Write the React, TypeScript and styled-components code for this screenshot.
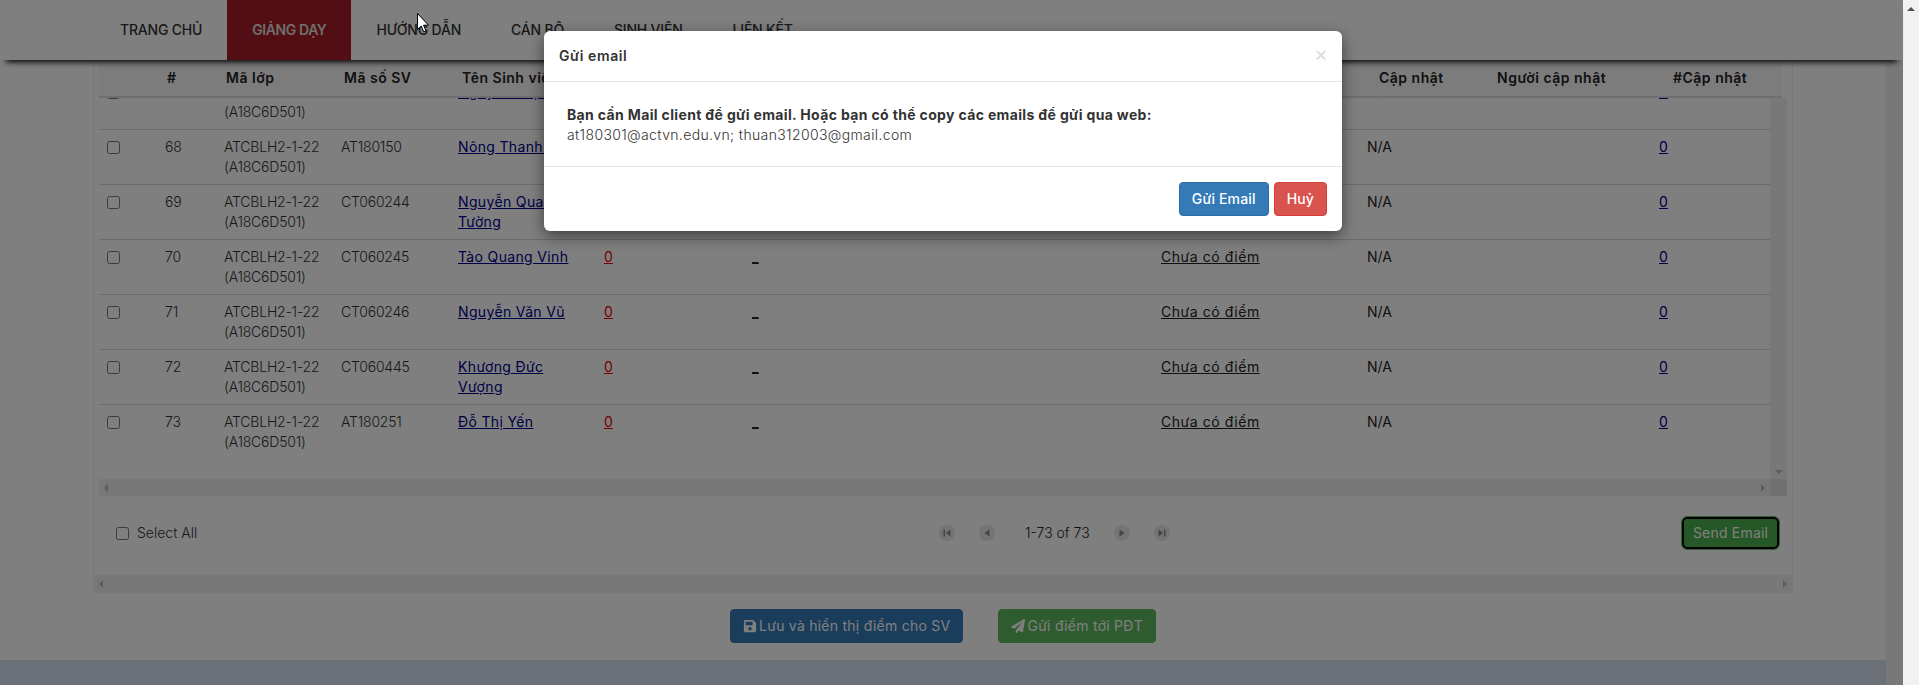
import React from 'react';
import styled, { createGlobalStyle } from 'styled-components';
import { FaSave, FaPaperPlane } from 'react-icons/fa';

const GlobalStyle = createGlobalStyle`
  html, body {
    margin: 0;
    padding: 0;
    overflow: hidden;
  }
  body {
    font-family: Inter, "Open Sans", "Liberation Sans", sans-serif;
    font-size: 14px;
    line-height: 20px;
    color: #333;
    background: #f1f1f1;
  }
  * { box-sizing: border-box; }
`;

const Window = styled.div`
  display: flex;
  width: 1919px;
  height: 685px;
  overflow: hidden;
`;

const Page = styled.div`
  position: relative;
  display: flex;
  flex-direction: column;
  width: 1903px;
  background: #fff;
`;

const BrowserScroll = styled.div`
  flex: 1;
  display: flex;
  justify-content: center;
  padding-top: 7px;
  background: #f1f1f1;
`;

const Navbar = styled.nav`
  position: relative;
  z-index: 2;
  display: flex;
  flex: none;
  height: 60px;
  padding-left: 95px;
  background: #fff;
  box-shadow: 0 8px 6px -6px #000;
`;

const NavItem = styled.a<{ $active?: boolean }>`
  display: flex;
  align-items: center;
  padding: 0 25px;
  font-weight: ${p => (p.$active ? 600 : 500)};
  letter-spacing: ${p => (p.$active ? '-0.4px' : '-0.2px')};
  color: ${p => (p.$active ? '#ddd' : '#333')};
  background: ${p => (p.$active ? '#a41c24' : 'transparent')};
`;

const Middle = styled.div`
  display: flex;
  flex: none;
  height: 625px;
`;

const Content = styled.div`
  display: flex;
  flex-direction: column;
  width: 1886px;
`;

const InnerScroll = styled.div`
  width: 17px;
  background: #f1f1f1;
`;

const Panel = styled.div`
  display: flex;
  flex-direction: column;
  margin-left: 93px;
  width: 1700px;
  height: 533px;
  border-left: 1px solid #eee;
  border-right: 1px solid #eee;
`;

const TableArea = styled.div`
  margin-left: 5px;
  width: 1688px;
`;

const HeaderRow = styled.div`
  display: grid;
  grid-template-columns: 60px 59px 118px 118px 917px 118px 176px 117px;
  align-items: center;
  width: 1683px;
  height: 38px;
  border-bottom: 2px solid #ddd;
  font-weight: 600;
  letter-spacing: 0.5px;
  color: #222;
  background: #f8f8f8;
  overflow: hidden;
`;

const HeaderCell = styled.div`
  padding: 0 8px;
  white-space: nowrap;
`;

const BodyWrap = styled.div`
  display: flex;
  height: 381px;
`;

const Rows = styled.div`
  width: 1671px;
  overflow: hidden;
`;

const RowList = styled.div`
  margin-top: -23px;
`;

const Row = styled.div`
  display: grid;
  grid-template-columns: 58px 59px 117px 117px 146px 148px 409px 206px 292px 119px;
  height: 55px;
  border-bottom: 1px solid #d6d6d6;
  &:last-child { border-bottom: 0; }
`;

const Cell = styled.div`
  padding: 7px 8px 0;
`;

const LightCell = styled(Cell)`
  font-weight: 300;
  letter-spacing: -0.2px;
`;

const CheckBox = styled.span`
  display: block;
  width: 13px;
  height: 13px;
  margin-top: 4px;
  border: 1px solid #767676;
  border-radius: 2.5px;
  background: #fff;
`;

const StudentLink = styled.a`
  color: #00008b;
  letter-spacing: 0.35px;
  text-decoration: underline;
`;

const ZeroLink = styled.a<{ $red?: boolean }>`
  color: ${p => (p.$red ? '#e00' : '#00008b')};
  text-decoration: underline;
`;

const GradeLink = styled.a`
  color: #222;
  letter-spacing: 0.55px;
  text-decoration: underline;
`;

const Plain = styled.span`
  color: #222;
`;

const VerticalTrack = styled.div`
  display: flex;
  align-items: flex-end;
  justify-content: center;
  width: 17px;
  padding-bottom: 5px;
  background: #f1f1f1;
`;

const HorizontalTrack = styled.div<{ $inset?: boolean }>`
  display: flex;
  flex: none;
  align-items: center;
  justify-content: space-between;
  width: ${p => (p.$inset ? '1671px' : 'auto')};
  height: ${p => (p.$inset ? '17px' : '18px')};
  padding: 0 5px;
  background: #f1f1f1;
`;

const ScrollRow = styled.div`
  display: flex;
`;

const Corner = styled.div`
  width: 17px;
  background: #e2e2e2;
`;

const Arrow = styled.span<{ $dir: 'left' | 'right' | 'up' | 'down' }>`
  display: block;
  width: 0;
  height: 0;
  ${p => p.$dir === 'left' && 'border-top: 4px solid transparent; border-bottom: 4px solid transparent; border-right: 4px solid #b8b8b8;'}
  ${p => p.$dir === 'right' && 'border-top: 4px solid transparent; border-bottom: 4px solid transparent; border-left: 4px solid #b8b8b8;'}
  ${p => p.$dir === 'down' && 'border-left: 4px solid transparent; border-right: 4px solid transparent; border-top: 4px solid #b8b8b8;'}
  ${p => p.$dir === 'up' && 'border-left: 4px solid transparent; border-right: 4px solid transparent; border-bottom: 4px solid #505050;'}
`;

const Footer = styled.div`
  display: grid;
  grid-template-columns: 811px 1fr auto;
  align-items: center;
  height: 79px;
  padding: 0 12px 5px 22px;
`;

const SelectAll = styled.label`
  display: flex;
  align-items: center;
  gap: 8px;
  font-weight: 300;
  color: #333;

  ${CheckBox} { margin: 0; }
`;

const Pager = styled.div`
  display: flex;
  align-items: center;
`;

const PagerButton = styled.span`
  display: flex;
  align-items: center;
  justify-content: center;
  width: 16px;
  height: 16px;
  margin: 0 12px;
  border-radius: 50%;
  background: #e8e8e8;
`;

const PagerText = styled.span`
  margin: 0 12px 0 18px;
  font-weight: 300;
  color: #222;
`;

const SendButton = styled.button`
  width: 97px;
  height: 32px;
  margin: 1px;
  padding: 0;
  font: inherit;
  letter-spacing: 0.2px;
  color: #fff;
  background: #4cae4c;
  border: 2px solid #000;
  border-radius: 5px;
  outline: 1px solid #5cb85c;
`;

const Actions = styled.div`
  display: flex;
  flex: none;
  justify-content: center;
  gap: 35px;
  margin-left: 93px;
  width: 1700px;
  padding-top: 16px;
  height: 67px;
`;

const ActionButton = styled.button<{ $color: string }>`
  display: flex;
  align-items: center;
  gap: 2px;
  height: 34px;
  padding: 0 12px;
  font: inherit;
  letter-spacing: 0.25px;
  color: #fff;
  background: ${p => p.$color};
  border: 1px solid ${p => p.$color};
  border-radius: 4px;
`;

const BottomBand = styled.div`
  flex: 1;
  background: #d9e0f3;
`;

const Overlay = styled.div`
  position: absolute;
  inset: 0;
  z-index: 3;
  background: rgba(0, 0, 0, 0.5);
`;

const Modal = styled.div`
  position: absolute;
  left: 544px;
  top: 31px;
  z-index: 4;
  width: 798px;
  height: 200px;
  background: #fff;
  border-radius: 6px;
  box-shadow: 0 5px 15px rgba(0, 0, 0, 0.5);
`;

const ModalHeader = styled.div`
  display: flex;
  align-items: center;
  justify-content: space-between;
  height: 51px;
  padding: 0 15px;
  border-bottom: 1px solid #e5e5e5;
`;

const ModalTitle = styled.div`
  font-weight: 600;
  letter-spacing: 0.6px;
  color: #333;
`;

const CloseMark = styled.span`
  font-size: 21px;
  color: #dcdcdc;
  margin: -4px -1px 0 0;
`;

const ModalBody = styled.div`
  height: 85px;
  padding: 23px 23px 0;
  border-bottom: 1px solid #e5e5e5;
`;

const ModalBold = styled.div`
  font-weight: 700;
  letter-spacing: 0.35px;
  color: #333;
`;

const ModalEmails = styled.div`
  font-weight: 300;
  letter-spacing: 0.36px;
  color: #333;
`;

const ModalFooter = styled.div`
  display: flex;
  justify-content: flex-end;
  gap: 5px;
  padding: 15px;
`;

const ModalButton = styled.button<{ $color: string; $border: string }>`
  height: 34px;
  padding: 0 12px;
  font: inherit;
  font-weight: 500;
  letter-spacing: 0.15px;
  color: #fff;
  background: ${p => p.$color};
  border: 1px solid ${p => p.$border};
  border-radius: 4px;
`;

const Cursor = styled.svg`
  position: absolute;
  left: 417px;
  top: 13px;
  z-index: 5;
`;

const navItems = ['TRANG CHỦ', 'GIẢNG DẠY', 'HƯỚNG DẪN', 'CÁN BỘ', 'SINH VIÊN', 'LIÊN KẾT'];

const students = [
  { no: 67, code: 'AT180149', name: 'Nguyễn Thị Hoa' },
  { no: 68, code: 'AT180150', name: 'Nông Thanh Bình' },
  { no: 69, code: 'CT060244', name: 'Nguyễn Quang Tường' },
  { no: 70, code: 'CT060245', name: 'Tào Quang Vinh' },
  { no: 71, code: 'CT060246', name: 'Nguyễn Văn Vũ' },
  { no: 72, code: 'CT060445', name: 'Khương Đức Vượng' },
  { no: 73, code: 'AT180251', name: 'Đỗ Thị Yến' },
];

const PagerIcon = ({ d }: { d: string }) => (
  <PagerButton>
    <svg width="10" height="10" viewBox="0 0 10 10">
      <path d={d} fill="#888" />
    </svg>
  </PagerButton>
);

export default function App() {
  return (
    <Window>
      <GlobalStyle />
      <Page>
        <Navbar>
          {navItems.map((item, i) => (
            <NavItem key={item} $active={i === 1}>{item}</NavItem>
          ))}
        </Navbar>
        <Middle>
          <Content>
            <Panel>
              <TableArea>
                <HeaderRow>
                  <HeaderCell />
                  <HeaderCell>#</HeaderCell>
                  <HeaderCell>Mã lớp</HeaderCell>
                  <HeaderCell>Mã số SV</HeaderCell>
                  <HeaderCell>Tên Sinh viên</HeaderCell>
                  <HeaderCell>Cập nhật</HeaderCell>
                  <HeaderCell>Người cập nhật</HeaderCell>
                  <HeaderCell>#Cập nhật</HeaderCell>
                </HeaderRow>
                <BodyWrap>
                  <Rows>
                    <RowList>
                      {students.map(s => (
                        <Row key={s.no}>
                          <Cell><CheckBox /></Cell>
                          <LightCell>{s.no}</LightCell>
                          <LightCell>ATCBLH2-1-22 (A18C6D501)</LightCell>
                          <LightCell>{s.code}</LightCell>
                          <Cell><StudentLink>{s.name}</StudentLink></Cell>
                          <Cell><ZeroLink $red>0</ZeroLink></Cell>
                          <Cell><GradeLink>_</GradeLink></Cell>
                          <Cell><GradeLink>Chưa có điểm</GradeLink></Cell>
                          <Cell><Plain>N/A</Plain></Cell>
                          <Cell><ZeroLink>0</ZeroLink></Cell>
                        </Row>
                      ))}
                    </RowList>
                  </Rows>
                  <VerticalTrack><Arrow $dir="down" /></VerticalTrack>
                </BodyWrap>
                <ScrollRow>
                  <HorizontalTrack $inset>
                    <Arrow $dir="left" />
                    <Arrow $dir="right" />
                  </HorizontalTrack>
                  <Corner />
                </ScrollRow>
              </TableArea>
              <Footer>
                <SelectAll><CheckBox />Select All</SelectAll>
                <Pager>
                  <PagerIcon d="M1.5 1.5h1.5v7H1.5zM8.5 1.5v7L4 5z" />
                  <PagerIcon d="M7.5 1.5v7L2.5 5z" />
                  <PagerText>1-73 of 73</PagerText>
                  <PagerIcon d="M2.5 1.5v7L7.5 5z" />
                  <PagerIcon d="M1.5 1.5v7L6 5zM7 1.5h1.5v7H7z" />
                </Pager>
                <SendButton>Send Email</SendButton>
              </Footer>
              <HorizontalTrack>
                <Arrow $dir="left" />
                <Arrow $dir="right" />
              </HorizontalTrack>
            </Panel>
            <Actions>
              <ActionButton $color="#337ab7"><FaSave size={14} />Lưu và hiển thị điểm cho SV</ActionButton>
              <ActionButton $color="#5cb85c"><FaPaperPlane size={14} />Gửi điểm tới PĐT</ActionButton>
            </Actions>
            <BottomBand />
          </Content>
          <InnerScroll />
        </Middle>
        <Overlay />
        <Modal>
          <ModalHeader>
            <ModalTitle>Gửi email</ModalTitle>
            <CloseMark>×</CloseMark>
          </ModalHeader>
          <ModalBody>
            <ModalBold>Bạn cần Mail client để gửi email. Hoặc bạn có thể copy các emails để gửi qua web:</ModalBold>
            <ModalEmails>at180301@actvn.edu.vn; thuan312003@gmail.com</ModalEmails>
          </ModalBody>
          <ModalFooter>
            <ModalButton $color="#337ab7" $border="#2e6da4">Gửi Email</ModalButton>
            <ModalButton $color="#d9534f" $border="#d43f3a">Huỷ</ModalButton>
          </ModalFooter>
        </Modal>
        <Cursor width="12" height="20" viewBox="0 0 12 20">
          <path d="M0.5 0.5V16.5L4.2 13L6.7 18.8L9 17.8L6.5 12.2H11.5Z" fill="#fff" stroke="#000" strokeWidth="1" />
        </Cursor>
      </Page>
      <BrowserScroll><Arrow $dir="up" /></BrowserScroll>
    </Window>
  );
}
